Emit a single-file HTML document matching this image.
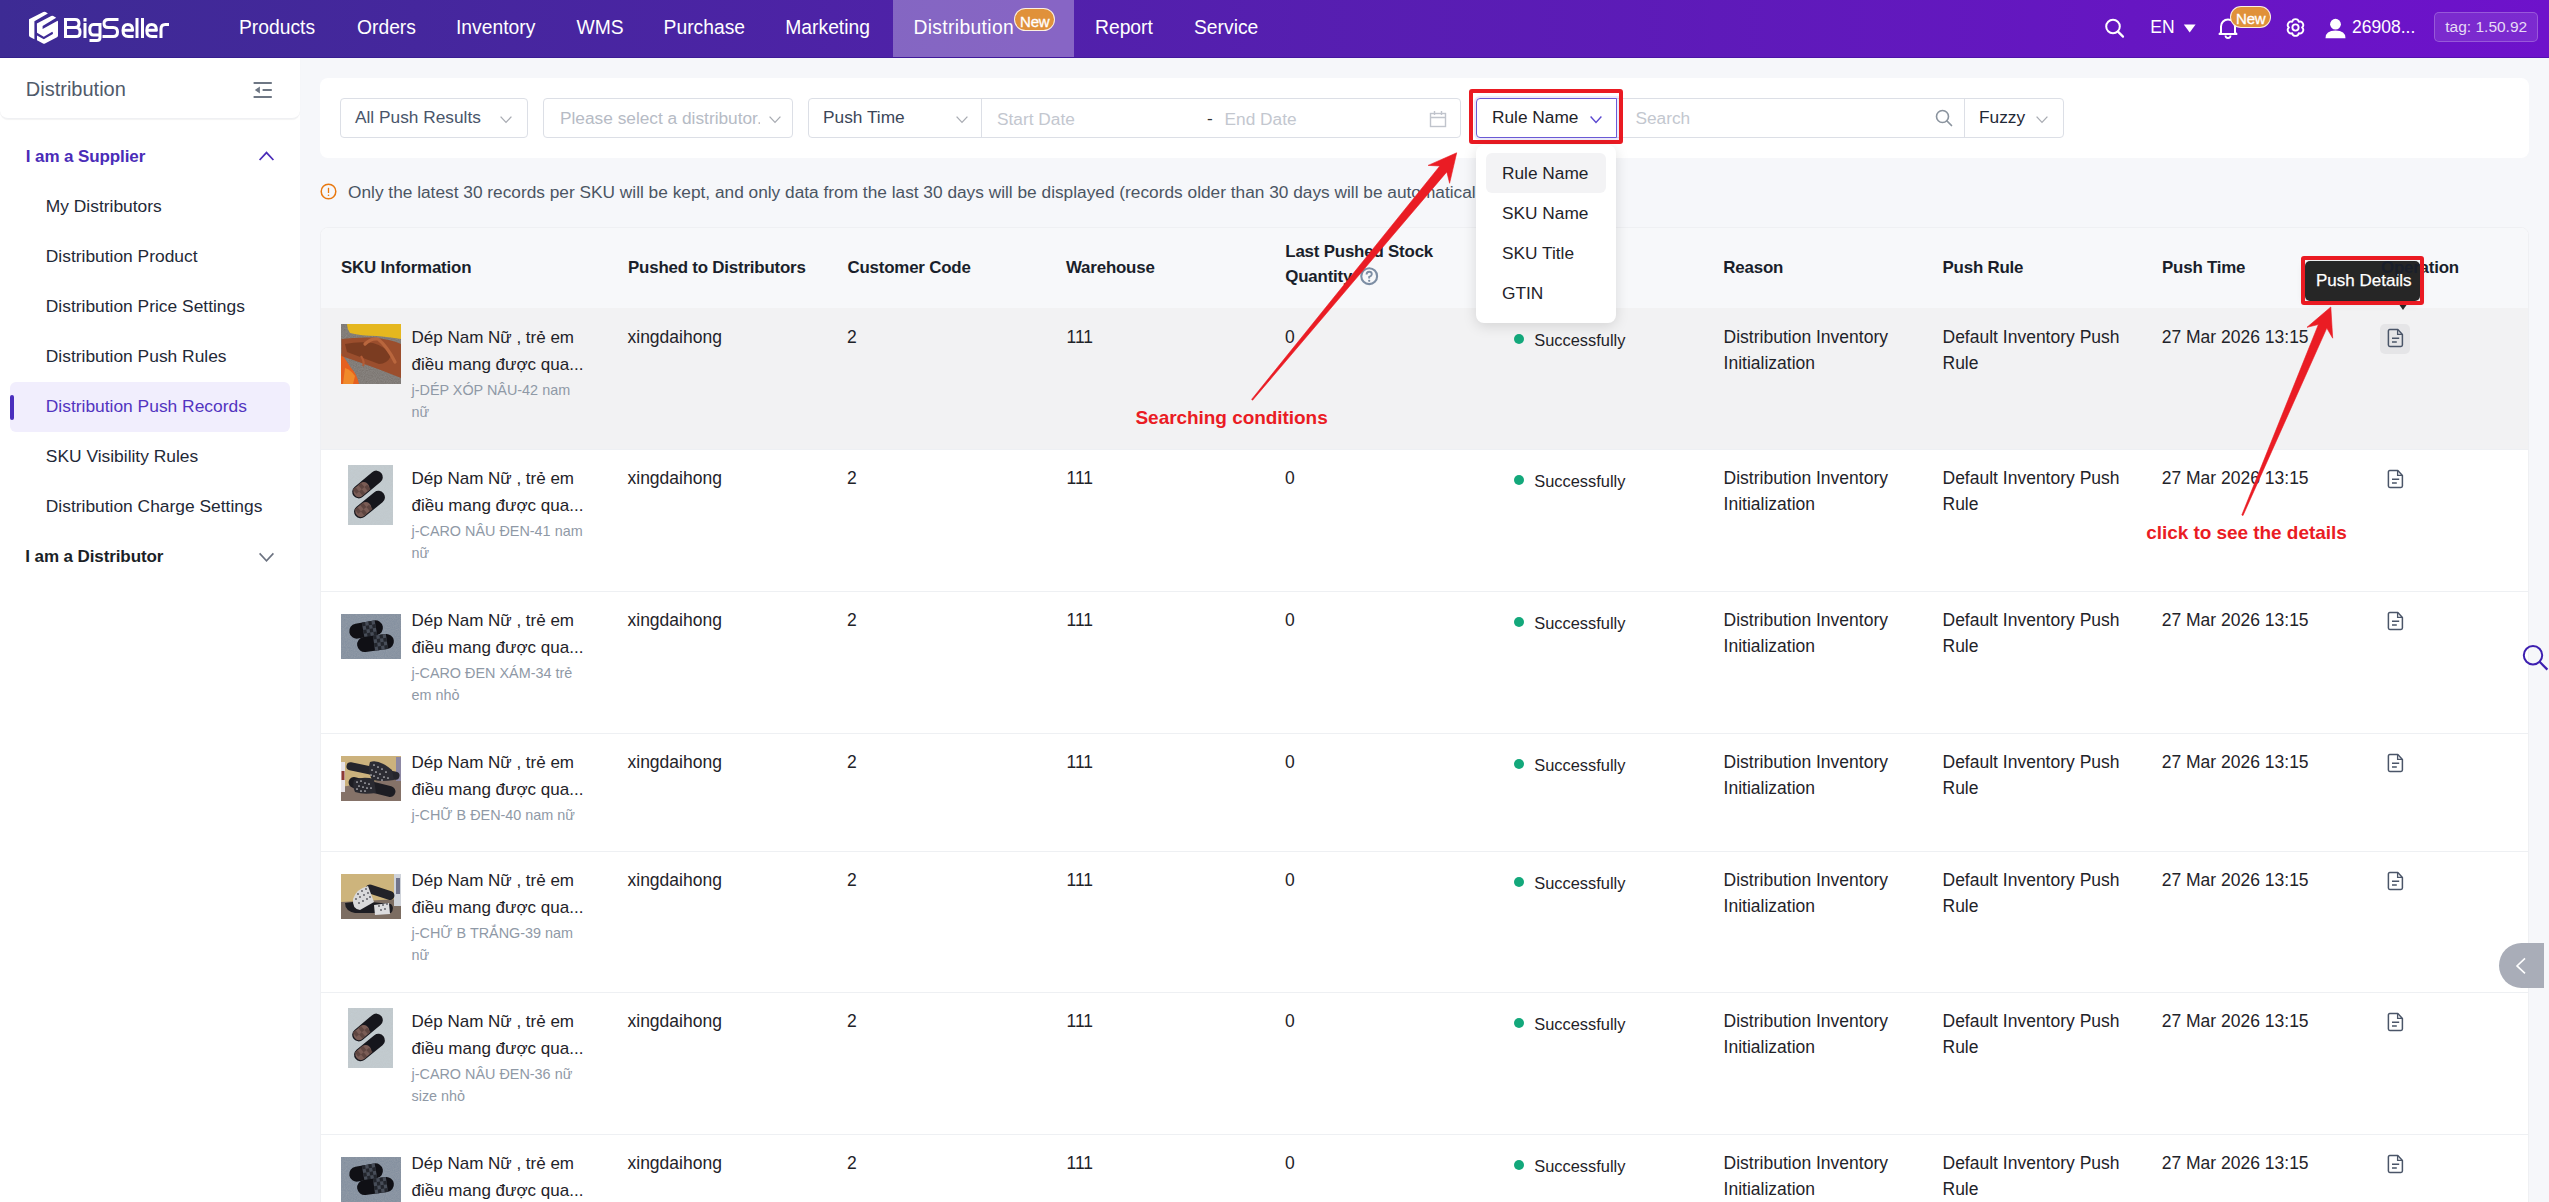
<!DOCTYPE html><html><head><meta charset="utf-8"><title>BigSeller</title><style>
html,body{margin:0;padding:0;}
body{width:2549px;height:1202px;overflow:hidden;position:relative;background:#f6f7fa;font-family:"Liberation Sans",sans-serif;}
.t{position:absolute;white-space:nowrap;line-height:1;}
.b{position:absolute;box-sizing:border-box;}
.s{position:absolute;overflow:visible;}
</style></head><body>
<div class="b" style="left:0px;top:0px;width:2549px;height:58px;background:linear-gradient(90deg,#3d2b94 0%,#6e12cb 100%);"></div>
<div class="b" style="left:0px;top:57px;width:2549px;height:1px;background:rgba(30,10,120,0.3);"></div>
<div class="b" style="left:893px;top:0px;width:181px;height:57px;background:rgba(255,255,255,0.31);"></div>
<svg class="s" style="left:24px;top:8px;" width="40" height="40" viewBox="0 0 40 40"><g fill="#fff"><path d="M5,11.2 L19.3,3.9 Q20.5,3.4 21.6,4 L23.9,5.4 L10.4,13.2 L10.4,31.2 L6,28.9 Q5,28.3 5,27.2 Z"/><path d="M12.9,15.6 L27.2,7.9 Q28.3,7.4 29.3,8 L32.2,9.8 L18.6,18 L18.6,20.9 L33.6,12.8 L34,13.6 L34,27.6 Q34,28.6 33,29.2 L21,35.6 Q20,36.1 19,35.6 L13,32.3 L13,27.6 L19.8,31.3 L28.9,26 Q29.4,24.6 28.2,23.8 L19.8,28.7 L13,24.8 Z"/></g></svg>
<svg class="s" style="left:0px;top:0px;" width="180" height="50" viewBox="0 0 180 50"><g fill="none" stroke="#fff" stroke-width="3" stroke-linejoin="round"><path d="M65.5,18 L65.5,38 M65.5,19.5 L75,19.5 Q79,19.5 79,23.2 L79,23.8 Q79,27.5 75,27.5 L65.5,27.5 L76,27.5 Q80,27.5 80,31.6 L80,32.4 Q80,36.5 76,36.5 L65.5,36.5"/><path d="M85,23 L85,38"/><path d="M100,24.5 L93.5,24.5 Q89.8,24.5 89.8,29.7 Q89.8,35 93.5,35 L100,35 M100,23 L100,37.5 Q100,40.5 96.8,40.5 L89.5,40.5"/><path d="M118.5,19.5 L108.2,19.5 Q104,19.5 104,23.5 Q104,27.5 108.2,27.5 L113.3,27.5 Q117.5,27.5 117.5,32 Q117.5,36.5 113.3,36.5 L102.5,36.5"/><path d="M123,30.3 L132.6,30.3 Q132.6,24.5 127.8,24.5 Q123,24.5 123,30.5 Q123,36.5 128.2,36.5 L133.5,36.5"/><path d="M137,18 L137,38 M142.5,18 L142.5,38"/><path d="M146.8,30.3 L156.4,30.3 Q156.4,24.5 151.6,24.5 Q146.8,24.5 146.8,30.5 Q146.8,36.5 152,36.5 L157.3,36.5"/><path d="M161,38 L161,29 Q161,24.5 165.2,24.5 L169,24.5"/></g><rect x="83.5" y="18" width="3" height="3.5" fill="#fff"/></svg>
<div class="t" style="left:239.0px;top:18.26px;font-size:19.3px;color:#fff;">Products</div>
<div class="t" style="left:357.0px;top:18.26px;font-size:19.3px;color:#fff;">Orders</div>
<div class="t" style="left:456.0px;top:18.26px;font-size:19.3px;color:#fff;">Inventory</div>
<div class="t" style="left:576.5px;top:18.26px;font-size:19.3px;color:#fff;">WMS</div>
<div class="t" style="left:663.6px;top:18.26px;font-size:19.3px;color:#fff;">Purchase</div>
<div class="t" style="left:785.3px;top:18.26px;font-size:19.3px;color:#fff;">Marketing</div>
<div class="t" style="left:913.4px;top:18.26px;font-size:19.3px;color:#fff;letter-spacing:0.35px;">Distribution</div>
<div class="t" style="left:1095.0px;top:18.26px;font-size:19.3px;color:#fff;">Report</div>
<div class="t" style="left:1194.0px;top:18.26px;font-size:19.3px;color:#fff;">Service</div>
<div class="b" style="left:1014px;top:8px;width:41px;height:23px;background:#e0913a;border:1px solid rgba(255,255,255,0.85);border-radius:12px;"></div>
<div class="t" style="left:1020.0px;top:13.50px;font-size:15px;color:#fff;letter-spacing:-0.2px;-webkit-text-stroke:0.3px #fff;">New</div>
<svg class="s" style="left:2104px;top:18px;" width="22" height="20" viewBox="0 0 22 20"><circle cx="9" cy="8.5" r="6.8" fill="none" stroke="#fff" stroke-width="2"/><path d="M14,13.6 L19,18.6" stroke="#fff" stroke-width="2.2" stroke-linecap="round"/></svg>
<div class="t" style="left:2150.3px;top:18.78px;font-size:17.5px;color:#fff;">EN</div>
<svg class="s" style="left:2183px;top:24px;" width="14" height="10" viewBox="0 0 14 10"><path d="M0.8,0.6 L12.6,0.6 L6.7,8.4 Z" fill="#fff"/></svg>
<svg class="s" style="left:2218px;top:17px;" width="20" height="22" viewBox="0 0 20 22"><path d="M3,15.5 L3,9.5 A7,7 0 0 1 17,9.5 L17,15.5 L18.5,17 L1.5,17 Z" fill="none" stroke="#fff" stroke-width="2" stroke-linejoin="round"/><path d="M7.5,18.5 A2.5,2.5 0 0 0 12.5,18.5" fill="none" stroke="#fff" stroke-width="1.8"/></svg>
<div class="b" style="left:2230px;top:6px;width:41px;height:22px;background:#e0913a;border:1px solid rgba(255,255,255,0.85);border-radius:12px;"></div>
<div class="t" style="left:2236.0px;top:11.00px;font-size:15px;color:#fff;letter-spacing:-0.2px;-webkit-text-stroke:0.3px #fff;">New</div>
<svg class="s" style="left:2285px;top:17px;" width="21" height="21" viewBox="0 0 21 21"><path d="M7.20,4.78 C7.85,1.27 13.15,1.27 13.80,4.78 C17.17,3.59 19.81,8.18 17.10,10.50 C19.81,12.82 17.17,17.41 13.80,16.22 C13.15,19.73 7.85,19.73 7.20,16.22 C3.83,17.41 1.19,12.82 3.90,10.50 C1.19,8.18 3.83,3.59 7.20,4.78 Z" fill="none" stroke="#fff" stroke-width="1.9" stroke-linejoin="round"/><circle cx="10.5" cy="10.5" r="3.1" fill="none" stroke="#fff" stroke-width="1.9"/></svg>
<svg class="s" style="left:2325px;top:18px;" width="21" height="21" viewBox="0 0 21 21"><circle cx="10.5" cy="6.2" r="5.4" fill="#fff"/><path d="M0.5,20.2 Q0.5,12.6 10.5,12.6 Q20.5,12.6 20.5,20.2 Z" fill="#fff"/></svg>
<div class="t" style="left:2352.0px;top:18.98px;font-size:17.5px;color:#fff;">26908...</div>
<div class="b" style="left:2434px;top:12px;width:104px;height:30px;background:rgba(255,255,255,0.1);border:1px solid rgba(255,255,255,0.22);border-radius:5px;"></div>
<div class="t" style="left:2445.3px;top:19.28px;font-size:15.5px;color:#e6dcf5;">tag: 1.50.92</div>
<div class="b" style="left:0px;top:58px;width:300px;height:1144px;background:#fff;"></div>
<div class="b" style="left:0px;top:58px;width:300px;height:61px;background:#fff;border-radius:0 0 8px 8px;box-shadow:0 1px 1px rgba(0,0,0,0.05);border-bottom:1px solid #eff0f3;"></div>
<div class="t" style="left:25.8px;top:79.37px;font-size:20px;color:#505a6a;">Distribution</div>
<svg class="s" style="left:252px;top:80px;" width="22" height="19" viewBox="0 0 22 19"><path d="M1.6,2.9 L19.8,2.9 M10.6,10 L19.8,10 M1.6,16.9 L19.8,16.9" stroke="#6e7784" stroke-width="2"/><path d="M2.8,10 L7.9,6.6 L7.9,13.4 Z" fill="#6e7784"/></svg>
<div class="t" style="left:25.8px;top:147.61px;font-size:17px;color:#4a2cb8;font-weight:700;letter-spacing:-0.1px;">I am a Supplier</div>
<svg class="s" style="left:258px;top:150px;" width="17" height="12" viewBox="0 0 17 12"><path d="M1.6,10 L8.5,2.6 L15.4,10" fill="none" stroke="#4a2cb8" stroke-width="1.7"/></svg>
<div class="b" style="left:10px;top:382px;width:280px;height:50px;background:#f1eefd;border-radius:6px;"></div>
<div class="b" style="left:10px;top:395px;width:4px;height:25px;background:#4a2fbd;border-radius:2px;"></div>
<div class="t" style="left:45.8px;top:198.07px;font-size:17.4px;color:#1f2937;">My Distributors</div>
<div class="t" style="left:45.8px;top:248.07px;font-size:17.4px;color:#1f2937;">Distribution Product</div>
<div class="t" style="left:45.8px;top:298.07px;font-size:17.4px;color:#1f2937;">Distribution Price Settings</div>
<div class="t" style="left:45.8px;top:348.07px;font-size:17.4px;color:#1f2937;">Distribution Push Rules</div>
<div class="t" style="left:45.8px;top:398.07px;font-size:17.4px;color:#5234c0;">Distribution Push Records</div>
<div class="t" style="left:45.8px;top:448.07px;font-size:17.4px;color:#1f2937;">SKU Visibility Rules</div>
<div class="t" style="left:45.8px;top:498.07px;font-size:17.4px;color:#1f2937;">Distribution Charge Settings</div>
<div class="t" style="left:25.3px;top:547.91px;font-size:17px;color:#1b1f27;font-weight:700;letter-spacing:-0.1px;">I am a Distributor</div>
<svg class="s" style="left:258px;top:551px;" width="17" height="12" viewBox="0 0 17 12"><path d="M1.6,2.4 L8.5,9.8 L15.4,2.4" fill="none" stroke="#6b7280" stroke-width="1.6"/></svg>
<div class="b" style="left:320px;top:78px;width:2209px;height:80px;background:#fff;border-radius:8px;"></div>
<div class="b" style="left:340px;top:98px;width:188px;height:40px;border:1px solid #dcdfe6;border-radius:4px;background:#fff;"></div>
<div class="t" style="left:355.0px;top:108.65px;font-size:17.3px;color:#49556a;">All Push Results</div>
<svg class="s" style="left:500px;top:115.5px;" width="12" height="7" viewBox="0 0 12 7"><path d="M0.6,0.6 L6.0,6.4 L11.4,0.6" fill="none" stroke="#a8abb2" stroke-width="1.3"/></svg>
<div class="b" style="left:543px;top:98px;width:250px;height:40px;border:1px solid #dcdfe6;border-radius:4px;background:#fff;"></div>
<div class="t" style="left:560px;top:108px;font-size:17.3px;color:#b6bbc5;width:200px;overflow:hidden;line-height:20px;">Please select a distributor.</div>
<svg class="s" style="left:769px;top:115.5px;" width="12" height="7" viewBox="0 0 12 7"><path d="M0.6,0.6 L6.0,6.4 L11.4,0.6" fill="none" stroke="#a8abb2" stroke-width="1.3"/></svg>
<div class="b" style="left:808px;top:98px;width:653px;height:40px;border:1px solid #dcdfe6;border-radius:4px;background:#fff;"></div>
<div class="b" style="left:981px;top:98px;width:1px;height:40px;background:#dcdfe6;"></div>
<div class="t" style="left:823.0px;top:108.65px;font-size:17.3px;color:#3b4658;">Push Time</div>
<svg class="s" style="left:956px;top:115.5px;" width="12" height="7" viewBox="0 0 12 7"><path d="M0.6,0.6 L6.0,6.4 L11.4,0.6" fill="none" stroke="#a8abb2" stroke-width="1.3"/></svg>
<div class="t" style="left:997.0px;top:111.15px;font-size:17.3px;color:#c3c7cf;">Start Date</div>
<div class="t" style="left:1207.0px;top:110.35px;font-size:17.3px;color:#303133;">-</div>
<div class="t" style="left:1224.5px;top:111.25px;font-size:17.3px;color:#c3c7cf;">End Date</div>
<svg class="s" style="left:1429px;top:110px;" width="18" height="18" viewBox="0 0 18 18"><rect x="1.5" y="3.5" width="15" height="13" fill="none" stroke="#c0c4cc" stroke-width="1.4"/><path d="M1.5,7.5 L16.5,7.5 M5.5,1 L5.5,5 M12.5,1 L12.5,5" stroke="#c0c4cc" stroke-width="1.4"/></svg>
<div class="b" style="left:1600px;top:98px;width:464px;height:40px;border:1px solid #dcdfe6;border-radius:0 4px 4px 0;background:#fff;"></div>
<div class="b" style="left:1964px;top:98px;width:1px;height:40px;background:#dcdfe6;"></div>
<div class="t" style="left:1635.4px;top:109.65px;font-size:17.3px;color:#c3c7cf;">Search</div>
<svg class="s" style="left:1935px;top:109px;" width="18" height="18" viewBox="0 0 18 18"><circle cx="7.5" cy="7.5" r="6" fill="none" stroke="#8a939e" stroke-width="1.6"/><path d="M12,12 L16.5,16.5" stroke="#8a939e" stroke-width="1.7" stroke-linecap="round"/></svg>
<div class="t" style="left:1979.0px;top:108.65px;font-size:17.3px;color:#1f2937;">Fuzzy</div>
<svg class="s" style="left:2036px;top:115.5px;" width="12" height="7" viewBox="0 0 12 7"><path d="M0.6,0.6 L6.0,6.4 L11.4,0.6" fill="none" stroke="#a8abb2" stroke-width="1.3"/></svg>
<div class="b" style="left:1476px;top:98px;width:141px;height:40px;border:1px solid #6b5bd6;border-radius:4px 0 0 4px;background:#fff;box-shadow:0 0 0 2px rgba(107,91,214,0.12);"></div>
<div class="t" style="left:1492.0px;top:109.15px;font-size:17.3px;color:#1f2329;">Rule Name</div>
<svg class="s" style="left:1590px;top:116px;" width="12" height="7" viewBox="0 0 12 7"><path d="M0.6,0.6 L6.0,6.4 L11.4,0.6" fill="none" stroke="#5a48d0" stroke-width="1.4"/></svg>
<div class="b" style="left:1469px;top:89px;width:154px;height:55px;border:4px solid #ea1a22;border-radius:3px;"></div>
<svg class="s" style="left:320px;top:183px;" width="17" height="17" viewBox="0 0 17 17"><circle cx="8.5" cy="8.5" r="7.3" fill="none" stroke="#e8780f" stroke-width="1.5"/><path d="M8.5,4.8 L8.5,10" stroke="#e8780f" stroke-width="1.3"/><circle cx="8.5" cy="12.3" r="0.8" fill="#e8780f"/></svg>
<div class="t" style="left:348.0px;top:183.65px;font-size:17.3px;color:#4b5563;">Only the latest 30 records per SKU will be kept, and only data from the last 30 days will be displayed (records older than 30 days will be automatically deleted)</div>
<div class="b" style="left:320px;top:227px;width:2209px;height:983px;background:#fff;border:1px solid #eff0f3;border-radius:8px;"></div>
<div class="b" style="left:321px;top:228px;width:2207px;height:80px;background:#f7f8fa;border-radius:7px 7px 0 0;"></div>
<div class="t" style="left:341.0px;top:259.69px;font-size:16.9px;color:#1a1f2b;font-weight:700;letter-spacing:-0.2px;z-index:30;">SKU Information</div>
<div class="t" style="left:628.0px;top:259.69px;font-size:16.9px;color:#1a1f2b;font-weight:700;letter-spacing:-0.2px;z-index:30;">Pushed to Distributors</div>
<div class="t" style="left:847.5px;top:259.69px;font-size:16.9px;color:#1a1f2b;font-weight:700;letter-spacing:-0.2px;z-index:30;">Customer Code</div>
<div class="t" style="left:1066.0px;top:259.69px;font-size:16.9px;color:#1a1f2b;font-weight:700;letter-spacing:-0.2px;z-index:30;">Warehouse</div>
<div class="t" style="left:1285.3px;top:243.89px;font-size:16.9px;color:#1a1f2b;font-weight:700;letter-spacing:-0.2px;z-index:30;">Last Pushed Stock</div>
<div class="t" style="left:1285.3px;top:268.59px;font-size:16.9px;color:#1a1f2b;font-weight:700;letter-spacing:-0.2px;z-index:30;">Quantity</div>
<svg class="s" style="left:1360px;top:267px;" width="19" height="19" viewBox="0 0 19 19"><circle cx="9.2" cy="9.2" r="7.9" fill="none" stroke="#7d8ea4" stroke-width="2.1"/><path d="M6.6,7.4 Q6.6,4.8 9.2,4.8 Q11.8,4.8 11.8,7.2 Q11.8,8.8 9.2,9.8 L9.2,11.4" fill="none" stroke="#7d8ea4" stroke-width="1.9"/><circle cx="9.2" cy="13.8" r="1.15" fill="#7d8ea4"/></svg>
<div class="t" style="left:1504.0px;top:259.69px;font-size:16.9px;color:#1a1f2b;font-weight:700;letter-spacing:-0.2px;z-index:30;">Push Result</div>
<div class="t" style="left:1723.3px;top:259.69px;font-size:16.9px;color:#1a1f2b;font-weight:700;letter-spacing:-0.2px;z-index:30;">Reason</div>
<div class="t" style="left:1942.5px;top:259.69px;font-size:16.9px;color:#1a1f2b;font-weight:700;letter-spacing:-0.2px;z-index:30;">Push Rule</div>
<div class="t" style="left:2162.0px;top:259.69px;font-size:16.9px;color:#1a1f2b;font-weight:700;letter-spacing:-0.2px;z-index:30;">Push Time</div>
<div class="t" style="left:2381.0px;top:259.69px;font-size:16.9px;color:#1a1f2b;font-weight:700;letter-spacing:-0.2px;z-index:30;">Operation</div>
<div class="b" style="left:321px;top:308px;width:2207px;height:141px;background:#f2f2f3;"></div>
<svg class="s" style="left:341px;top:324px;" width="60" height="60" viewBox="0 0 60 60"><rect width="60" height="60" fill="#76706b"/><rect width="60" height="60" fill="#fff" filter="url(#nz)"/><path d="M6,0 L60,0 L60,15 Q48,13 36,12 Q20,12 9,9 Q6,5 6,0 Z" fill="#e5b71f"/><path d="M0,29 L0,60 L18,60 Q16,50 10,44 Q5,36 0,29 Z" fill="#e5601f"/><path d="M4,44 Q10,46 14,52 L12,60 L2,60 Z" fill="#f08a2a"/><path d="M0.5,15 Q14,13 31,13.5 Q50,15 60,20 L60,54 Q50,50 37,45 Q18,38 0.5,32 Z" fill="#9b4e2d"/><path d="M4,20 Q18,17 32,19 Q44,22 50,32 Q46,40 38,40 Q22,34 6,28 Z" fill="#7b3c21"/><path d="M24,20 Q30,14 37,15 Q46,22 54,38" fill="none" stroke="#b9663d" stroke-width="3.2" stroke-linecap="round"/><path d="M20,32 Q24,38 22,42" fill="none" stroke="#b25c36" stroke-width="2.2"/></svg>
<div class="t" style="left:411.5px;top:329.11px;font-size:17px;color:#1f2329;">Dép Nam Nữ , trẻ em</div>
<div class="t" style="left:411.5px;top:355.81px;font-size:17px;color:#1f2329;">điều mang được qua...</div>
<div class="t" style="left:411.5px;top:382.61px;font-size:14.4px;color:#8f99a6;">j-DÉP XÓP NÂU-42 nam</div>
<div class="t" style="left:411.5px;top:405.41px;font-size:14.4px;color:#8f99a6;">nữ</div>
<div class="t" style="left:627.5px;top:328.98px;font-size:17.5px;color:#1f2329;">xingdaihong</div>
<div class="t" style="left:847.0px;top:328.98px;font-size:17.5px;color:#1f2329;">2</div>
<div class="t" style="left:1066.5px;top:328.98px;font-size:17.5px;color:#1f2329;">111</div>
<div class="t" style="left:1285.0px;top:328.98px;font-size:17.5px;color:#1f2329;">0</div>
<div class="b" style="left:1514px;top:334px;width:10px;height:10px;background:#13a87b;border-radius:50%;"></div>
<div class="t" style="left:1534.3px;top:332.31px;font-size:16.4px;color:#1f2329;">Successfully</div>
<div class="t" style="left:1723.6px;top:329.38px;font-size:17.5px;color:#1f2329;">Distribution Inventory</div>
<div class="t" style="left:1723.6px;top:355.48px;font-size:17.5px;color:#1f2329;">Initialization</div>
<div class="t" style="left:1942.5px;top:329.38px;font-size:17.5px;color:#1f2329;">Default Inventory Push</div>
<div class="t" style="left:1942.5px;top:355.48px;font-size:17.5px;color:#1f2329;">Rule</div>
<div class="t" style="left:2161.7px;top:329.18px;font-size:17.5px;color:#1f2329;">27 Mar 2026 13:15</div>
<div class="b" style="left:2380px;top:324px;width:30px;height:30px;background:#e5e5e7;border-radius:5px;"></div>
<svg class="s" style="left:2386px;top:328px;" width="19" height="20" viewBox="0 0 19 20"><path d="M2.4,3 Q2.4,1.6 3.8,1.6 L11.8,1.6 L16.4,6.4 L16.4,17 Q16.4,18.4 15,18.4 L3.8,18.4 Q2.4,18.4 2.4,17 Z" fill="none" stroke="#4a5568" stroke-width="1.5" stroke-linejoin="round"/><path d="M11.6,1.8 L11.6,6.4 L16.2,6.4" fill="none" stroke="#4a5568" stroke-width="1.3"/><path d="M6,10.3 L13.2,10.3 M6,13.9 L10.8,13.9" stroke="#4a5568" stroke-width="1.5"/></svg>
<div class="b" style="left:321px;top:449px;width:2207px;height:1px;background:#eef0f3;"></div>
<svg class="s" style="left:348px;top:465px;" width="45" height="60" viewBox="0 0 45 60"><defs><filter id="nz" x="0" y="0" width="100%" height="100%"><feTurbulence type="fractalNoise" baseFrequency="0.9" numOctaves="2" seed="3"/><feColorMatrix values="0 0 0 0 0.5  0 0 0 0 0.5  0 0 0 0 0.5  0 0 0 0.35 0"/><feComposite in2="SourceGraphic" operator="in"/></filter></defs><rect width="45" height="60" fill="#c3cdd2"/><rect width="45" height="60" fill="#fff" filter="url(#nz)"/><g transform="rotate(-40 19.5 19.5)"><rect x="1.5" y="13" width="36" height="13" rx="6.5" fill="#16161c"/><rect x="3" y="14" width="17" height="11" rx="5" fill="#7a5c55"/><rect x="5.00" y="14.00" width="3.50" height="5.50" fill="#5e4540"/><rect x="8.50" y="19.50" width="3.50" height="5.50" fill="#5e4540"/><rect x="12.00" y="14.00" width="3.50" height="5.50" fill="#5e4540"/><rect x="15.50" y="19.50" width="3.50" height="5.50" fill="#5e4540"/></g><g transform="rotate(-39 21.5 39.5)"><rect x="3.5" y="33" width="36" height="13" rx="6.5" fill="#16161c"/><rect x="5" y="34" width="17" height="11" rx="5" fill="#7a5c55"/><rect x="7.00" y="34.00" width="3.50" height="5.50" fill="#5e4540"/><rect x="10.50" y="39.50" width="3.50" height="5.50" fill="#5e4540"/><rect x="14.00" y="34.00" width="3.50" height="5.50" fill="#5e4540"/><rect x="17.50" y="39.50" width="3.50" height="5.50" fill="#5e4540"/></g></svg>
<div class="t" style="left:411.5px;top:470.11px;font-size:17px;color:#1f2329;">Dép Nam Nữ , trẻ em</div>
<div class="t" style="left:411.5px;top:496.81px;font-size:17px;color:#1f2329;">điều mang được qua...</div>
<div class="t" style="left:411.5px;top:523.61px;font-size:14.4px;color:#8f99a6;">j-CARO NÂU ĐEN-41 nam</div>
<div class="t" style="left:411.5px;top:546.41px;font-size:14.4px;color:#8f99a6;">nữ</div>
<div class="t" style="left:627.5px;top:469.98px;font-size:17.5px;color:#1f2329;">xingdaihong</div>
<div class="t" style="left:847.0px;top:469.98px;font-size:17.5px;color:#1f2329;">2</div>
<div class="t" style="left:1066.5px;top:469.98px;font-size:17.5px;color:#1f2329;">111</div>
<div class="t" style="left:1285.0px;top:469.98px;font-size:17.5px;color:#1f2329;">0</div>
<div class="b" style="left:1514px;top:475px;width:10px;height:10px;background:#13a87b;border-radius:50%;"></div>
<div class="t" style="left:1534.3px;top:473.31px;font-size:16.4px;color:#1f2329;">Successfully</div>
<div class="t" style="left:1723.6px;top:470.38px;font-size:17.5px;color:#1f2329;">Distribution Inventory</div>
<div class="t" style="left:1723.6px;top:496.48px;font-size:17.5px;color:#1f2329;">Initialization</div>
<div class="t" style="left:1942.5px;top:470.38px;font-size:17.5px;color:#1f2329;">Default Inventory Push</div>
<div class="t" style="left:1942.5px;top:496.48px;font-size:17.5px;color:#1f2329;">Rule</div>
<div class="t" style="left:2161.7px;top:470.18px;font-size:17.5px;color:#1f2329;">27 Mar 2026 13:15</div>
<svg class="s" style="left:2386px;top:469px;" width="19" height="20" viewBox="0 0 19 20"><path d="M2.4,3 Q2.4,1.6 3.8,1.6 L11.8,1.6 L16.4,6.4 L16.4,17 Q16.4,18.4 15,18.4 L3.8,18.4 Q2.4,18.4 2.4,17 Z" fill="none" stroke="#4a5568" stroke-width="1.5" stroke-linejoin="round"/><path d="M11.6,1.8 L11.6,6.4 L16.2,6.4" fill="none" stroke="#4a5568" stroke-width="1.3"/><path d="M6,10.3 L13.2,10.3 M6,13.9 L10.8,13.9" stroke="#4a5568" stroke-width="1.5"/></svg>
<div class="b" style="left:321px;top:591px;width:2207px;height:1px;background:#eef0f3;"></div>
<svg class="s" style="left:341px;top:614px;" width="60" height="45" viewBox="0 0 60 45"><defs><filter id="nz" x="0" y="0" width="100%" height="100%"><feTurbulence type="fractalNoise" baseFrequency="0.9" numOctaves="2" seed="3"/><feColorMatrix values="0 0 0 0 0.5  0 0 0 0 0.5  0 0 0 0 0.5  0 0 0 0.35 0"/><feComposite in2="SourceGraphic" operator="in"/></filter></defs><rect width="60" height="45" fill="#7f8c9d"/><rect width="60" height="45" fill="#fff" filter="url(#nz)"/><g transform="rotate(-10 25 15)"><rect x="8" y="8" width="34" height="15" rx="7.5" fill="#101015"/><rect x="22" y="8" width="13" height="15" fill="#474d58"/><rect x="22" y="8" width="3.25" height="3.75" fill="#23262d"/><rect x="28.5" y="8" width="3.25" height="3.75" fill="#23262d"/><rect x="25.25" y="11.75" width="3.25" height="3.75" fill="#23262d"/><rect x="31.75" y="11.75" width="3.25" height="3.75" fill="#23262d"/><rect x="22" y="15.5" width="3.25" height="3.75" fill="#23262d"/><rect x="28.5" y="15.5" width="3.25" height="3.75" fill="#23262d"/><rect x="25.25" y="19.25" width="3.25" height="3.75" fill="#23262d"/><rect x="31.75" y="19.25" width="3.25" height="3.75" fill="#23262d"/></g><g transform="rotate(-8 34.5 29)"><rect x="16" y="21.5" width="37" height="15" rx="7.5" fill="#101015"/><rect x="33" y="21.5" width="13" height="15" fill="#474d58"/><rect x="33" y="21.5" width="3.25" height="3.75" fill="#23262d"/><rect x="39.5" y="21.5" width="3.25" height="3.75" fill="#23262d"/><rect x="36.25" y="25.25" width="3.25" height="3.75" fill="#23262d"/><rect x="42.75" y="25.25" width="3.25" height="3.75" fill="#23262d"/><rect x="33" y="29" width="3.25" height="3.75" fill="#23262d"/><rect x="39.5" y="29" width="3.25" height="3.75" fill="#23262d"/><rect x="36.25" y="32.75" width="3.25" height="3.75" fill="#23262d"/><rect x="42.75" y="32.75" width="3.25" height="3.75" fill="#23262d"/></g></svg>
<div class="t" style="left:411.5px;top:612.11px;font-size:17px;color:#1f2329;">Dép Nam Nữ , trẻ em</div>
<div class="t" style="left:411.5px;top:638.81px;font-size:17px;color:#1f2329;">điều mang được qua...</div>
<div class="t" style="left:411.5px;top:665.61px;font-size:14.4px;color:#8f99a6;">j-CARO ĐEN XÁM-34 trẻ</div>
<div class="t" style="left:411.5px;top:688.41px;font-size:14.4px;color:#8f99a6;">em nhỏ</div>
<div class="t" style="left:627.5px;top:611.98px;font-size:17.5px;color:#1f2329;">xingdaihong</div>
<div class="t" style="left:847.0px;top:611.98px;font-size:17.5px;color:#1f2329;">2</div>
<div class="t" style="left:1066.5px;top:611.98px;font-size:17.5px;color:#1f2329;">111</div>
<div class="t" style="left:1285.0px;top:611.98px;font-size:17.5px;color:#1f2329;">0</div>
<div class="b" style="left:1514px;top:617px;width:10px;height:10px;background:#13a87b;border-radius:50%;"></div>
<div class="t" style="left:1534.3px;top:615.31px;font-size:16.4px;color:#1f2329;">Successfully</div>
<div class="t" style="left:1723.6px;top:612.38px;font-size:17.5px;color:#1f2329;">Distribution Inventory</div>
<div class="t" style="left:1723.6px;top:638.48px;font-size:17.5px;color:#1f2329;">Initialization</div>
<div class="t" style="left:1942.5px;top:612.38px;font-size:17.5px;color:#1f2329;">Default Inventory Push</div>
<div class="t" style="left:1942.5px;top:638.48px;font-size:17.5px;color:#1f2329;">Rule</div>
<div class="t" style="left:2161.7px;top:612.18px;font-size:17.5px;color:#1f2329;">27 Mar 2026 13:15</div>
<svg class="s" style="left:2386px;top:611px;" width="19" height="20" viewBox="0 0 19 20"><path d="M2.4,3 Q2.4,1.6 3.8,1.6 L11.8,1.6 L16.4,6.4 L16.4,17 Q16.4,18.4 15,18.4 L3.8,18.4 Q2.4,18.4 2.4,17 Z" fill="none" stroke="#4a5568" stroke-width="1.5" stroke-linejoin="round"/><path d="M11.6,1.8 L11.6,6.4 L16.2,6.4" fill="none" stroke="#4a5568" stroke-width="1.3"/><path d="M6,10.3 L13.2,10.3 M6,13.9 L10.8,13.9" stroke="#4a5568" stroke-width="1.5"/></svg>
<div class="b" style="left:321px;top:733px;width:2207px;height:1px;background:#eef0f3;"></div>
<svg class="s" style="left:341px;top:756px;" width="60" height="45" viewBox="0 0 60 45"><rect width="60" height="45" fill="#ccb27d"/><path d="M0,31 L60,21 L60,45 L0,45 Z" fill="#857268"/><rect x="0" y="6" width="4" height="30" fill="#e6e2e6"/><rect x="0.5" y="15" width="3" height="9" fill="#8e3a36"/><rect x="55" y="1" width="5" height="24" fill="#8d88a3"/><g transform="rotate(12 32 15)"><rect x="5" y="11" width="54" height="8" rx="4" fill="#25252c"/></g><path d="M29,6 Q38,3 51,14 L53,24 Q40,26 31,24 Q26,15 29,6 Z" fill="#2c2c34"/><g transform="rotate(14 31 31)"><rect x="7" y="25.5" width="48" height="11" rx="5.5" fill="#1d1d23"/></g><path d="M13,24 Q22,20 33,23 L35,37 Q22,39 14,36 Q11,30 13,24 Z" fill="#2a2a31"/><g fill="#c9c9ce"><circle cx="33" cy="9" r="0.85"/><circle cx="37" cy="11" r="0.85"/><circle cx="41" cy="13" r="0.85"/><circle cx="45" cy="16" r="0.85"/><circle cx="31" cy="14" r="0.85"/><circle cx="35" cy="16" r="0.85"/><circle cx="39" cy="18" r="0.85"/><circle cx="43" cy="21" r="0.85"/><circle cx="47" cy="22" r="0.85"/><circle cx="33" cy="20" r="0.85"/><circle cx="37" cy="22" r="0.85"/><circle cx="41" cy="24" r="0.85"/><circle cx="30" cy="19" r="0.85"/><circle cx="16" cy="26" r="0.85"/><circle cx="20" cy="25" r="0.85"/><circle cx="24" cy="27" r="0.85"/><circle cx="28" cy="28" r="0.85"/><circle cx="18" cy="30" r="0.85"/><circle cx="22" cy="31" r="0.85"/><circle cx="26" cy="32" r="0.85"/><circle cx="30" cy="32" r="0.85"/><circle cx="20" cy="35" r="0.85"/><circle cx="24" cy="35" r="0.85"/><circle cx="16" cy="33" r="0.85"/></g></svg>
<div class="t" style="left:411.5px;top:754.11px;font-size:17px;color:#1f2329;">Dép Nam Nữ , trẻ em</div>
<div class="t" style="left:411.5px;top:780.81px;font-size:17px;color:#1f2329;">điều mang được qua...</div>
<div class="t" style="left:411.5px;top:807.61px;font-size:14.4px;color:#8f99a6;">j-CHỮ B ĐEN-40 nam nữ</div>
<div class="t" style="left:627.5px;top:753.98px;font-size:17.5px;color:#1f2329;">xingdaihong</div>
<div class="t" style="left:847.0px;top:753.98px;font-size:17.5px;color:#1f2329;">2</div>
<div class="t" style="left:1066.5px;top:753.98px;font-size:17.5px;color:#1f2329;">111</div>
<div class="t" style="left:1285.0px;top:753.98px;font-size:17.5px;color:#1f2329;">0</div>
<div class="b" style="left:1514px;top:759px;width:10px;height:10px;background:#13a87b;border-radius:50%;"></div>
<div class="t" style="left:1534.3px;top:757.31px;font-size:16.4px;color:#1f2329;">Successfully</div>
<div class="t" style="left:1723.6px;top:754.38px;font-size:17.5px;color:#1f2329;">Distribution Inventory</div>
<div class="t" style="left:1723.6px;top:780.48px;font-size:17.5px;color:#1f2329;">Initialization</div>
<div class="t" style="left:1942.5px;top:754.38px;font-size:17.5px;color:#1f2329;">Default Inventory Push</div>
<div class="t" style="left:1942.5px;top:780.48px;font-size:17.5px;color:#1f2329;">Rule</div>
<div class="t" style="left:2161.7px;top:754.18px;font-size:17.5px;color:#1f2329;">27 Mar 2026 13:15</div>
<svg class="s" style="left:2386px;top:753px;" width="19" height="20" viewBox="0 0 19 20"><path d="M2.4,3 Q2.4,1.6 3.8,1.6 L11.8,1.6 L16.4,6.4 L16.4,17 Q16.4,18.4 15,18.4 L3.8,18.4 Q2.4,18.4 2.4,17 Z" fill="none" stroke="#4a5568" stroke-width="1.5" stroke-linejoin="round"/><path d="M11.6,1.8 L11.6,6.4 L16.2,6.4" fill="none" stroke="#4a5568" stroke-width="1.3"/><path d="M6,10.3 L13.2,10.3 M6,13.9 L10.8,13.9" stroke="#4a5568" stroke-width="1.5"/></svg>
<div class="b" style="left:321px;top:851px;width:2207px;height:1px;background:#eef0f3;"></div>
<svg class="s" style="left:341px;top:874px;" width="60" height="45" viewBox="0 0 60 45"><rect width="60" height="45" fill="#cdb47c"/><path d="M0,28 L60,25 L60,45 L0,45 Z" fill="#7c6d62"/><rect x="53" y="0" width="7" height="32" fill="#cfd3da"/><rect x="55" y="4" width="4" height="16" fill="#70738a"/><g transform="rotate(18 38 18)"><rect x="24" y="13.5" width="30" height="9" rx="4.5" fill="#222228"/></g><path d="M4,29 Q4,37 14,39 L50,39 Q54,34 50,30 L20,27 Z" fill="#1c1c22"/><path d="M12,25 Q15,15 27,12 L33,28 L19,36 Q11,35 12,25 Z" fill="#d9d9db"/><path d="M33,31 L48,29 L49,40 L34,41 Z" fill="#dcdcde"/><g fill="#55555d"><circle cx="17" cy="20" r="0.9"/><circle cx="21" cy="17" r="0.9"/><circle cx="25" cy="15" r="0.9"/><circle cx="15" cy="25" r="0.9"/><circle cx="19" cy="23" r="0.9"/><circle cx="23" cy="21" r="0.9"/><circle cx="27" cy="19" r="0.9"/><circle cx="18" cy="29" r="0.9"/><circle cx="22" cy="27" r="0.9"/><circle cx="26" cy="25" r="0.9"/><circle cx="29" cy="23" r="0.9"/><circle cx="38" cy="32" r="0.9"/><circle cx="42" cy="31" r="0.9"/><circle cx="46" cy="30" r="0.9"/><circle cx="40" cy="36" r="0.9"/><circle cx="44" cy="35" r="0.9"/></g></svg>
<div class="t" style="left:411.5px;top:872.11px;font-size:17px;color:#1f2329;">Dép Nam Nữ , trẻ em</div>
<div class="t" style="left:411.5px;top:898.81px;font-size:17px;color:#1f2329;">điều mang được qua...</div>
<div class="t" style="left:411.5px;top:925.61px;font-size:14.4px;color:#8f99a6;">j-CHỮ B TRẮNG-39 nam</div>
<div class="t" style="left:411.5px;top:948.41px;font-size:14.4px;color:#8f99a6;">nữ</div>
<div class="t" style="left:627.5px;top:871.98px;font-size:17.5px;color:#1f2329;">xingdaihong</div>
<div class="t" style="left:847.0px;top:871.98px;font-size:17.5px;color:#1f2329;">2</div>
<div class="t" style="left:1066.5px;top:871.98px;font-size:17.5px;color:#1f2329;">111</div>
<div class="t" style="left:1285.0px;top:871.98px;font-size:17.5px;color:#1f2329;">0</div>
<div class="b" style="left:1514px;top:877px;width:10px;height:10px;background:#13a87b;border-radius:50%;"></div>
<div class="t" style="left:1534.3px;top:875.31px;font-size:16.4px;color:#1f2329;">Successfully</div>
<div class="t" style="left:1723.6px;top:872.38px;font-size:17.5px;color:#1f2329;">Distribution Inventory</div>
<div class="t" style="left:1723.6px;top:898.48px;font-size:17.5px;color:#1f2329;">Initialization</div>
<div class="t" style="left:1942.5px;top:872.38px;font-size:17.5px;color:#1f2329;">Default Inventory Push</div>
<div class="t" style="left:1942.5px;top:898.48px;font-size:17.5px;color:#1f2329;">Rule</div>
<div class="t" style="left:2161.7px;top:872.18px;font-size:17.5px;color:#1f2329;">27 Mar 2026 13:15</div>
<svg class="s" style="left:2386px;top:871px;" width="19" height="20" viewBox="0 0 19 20"><path d="M2.4,3 Q2.4,1.6 3.8,1.6 L11.8,1.6 L16.4,6.4 L16.4,17 Q16.4,18.4 15,18.4 L3.8,18.4 Q2.4,18.4 2.4,17 Z" fill="none" stroke="#4a5568" stroke-width="1.5" stroke-linejoin="round"/><path d="M11.6,1.8 L11.6,6.4 L16.2,6.4" fill="none" stroke="#4a5568" stroke-width="1.3"/><path d="M6,10.3 L13.2,10.3 M6,13.9 L10.8,13.9" stroke="#4a5568" stroke-width="1.5"/></svg>
<div class="b" style="left:321px;top:992px;width:2207px;height:1px;background:#eef0f3;"></div>
<svg class="s" style="left:348px;top:1008px;" width="45" height="60" viewBox="0 0 45 60"><defs><filter id="nz" x="0" y="0" width="100%" height="100%"><feTurbulence type="fractalNoise" baseFrequency="0.9" numOctaves="2" seed="3"/><feColorMatrix values="0 0 0 0 0.5  0 0 0 0 0.5  0 0 0 0 0.5  0 0 0 0.35 0"/><feComposite in2="SourceGraphic" operator="in"/></filter></defs><rect width="45" height="60" fill="#c3cdd2"/><rect width="45" height="60" fill="#fff" filter="url(#nz)"/><g transform="rotate(-40 19.5 19.5)"><rect x="1.5" y="13" width="36" height="13" rx="6.5" fill="#16161c"/><rect x="3" y="14" width="17" height="11" rx="5" fill="#7a5c55"/><rect x="5.00" y="14.00" width="3.50" height="5.50" fill="#5e4540"/><rect x="8.50" y="19.50" width="3.50" height="5.50" fill="#5e4540"/><rect x="12.00" y="14.00" width="3.50" height="5.50" fill="#5e4540"/><rect x="15.50" y="19.50" width="3.50" height="5.50" fill="#5e4540"/></g><g transform="rotate(-39 21.5 39.5)"><rect x="3.5" y="33" width="36" height="13" rx="6.5" fill="#16161c"/><rect x="5" y="34" width="17" height="11" rx="5" fill="#7a5c55"/><rect x="7.00" y="34.00" width="3.50" height="5.50" fill="#5e4540"/><rect x="10.50" y="39.50" width="3.50" height="5.50" fill="#5e4540"/><rect x="14.00" y="34.00" width="3.50" height="5.50" fill="#5e4540"/><rect x="17.50" y="39.50" width="3.50" height="5.50" fill="#5e4540"/></g></svg>
<div class="t" style="left:411.5px;top:1013.11px;font-size:17px;color:#1f2329;">Dép Nam Nữ , trẻ em</div>
<div class="t" style="left:411.5px;top:1039.81px;font-size:17px;color:#1f2329;">điều mang được qua...</div>
<div class="t" style="left:411.5px;top:1066.61px;font-size:14.4px;color:#8f99a6;">j-CARO NÂU ĐEN-36 nữ</div>
<div class="t" style="left:411.5px;top:1089.41px;font-size:14.4px;color:#8f99a6;">size nhỏ</div>
<div class="t" style="left:627.5px;top:1012.98px;font-size:17.5px;color:#1f2329;">xingdaihong</div>
<div class="t" style="left:847.0px;top:1012.98px;font-size:17.5px;color:#1f2329;">2</div>
<div class="t" style="left:1066.5px;top:1012.98px;font-size:17.5px;color:#1f2329;">111</div>
<div class="t" style="left:1285.0px;top:1012.98px;font-size:17.5px;color:#1f2329;">0</div>
<div class="b" style="left:1514px;top:1018px;width:10px;height:10px;background:#13a87b;border-radius:50%;"></div>
<div class="t" style="left:1534.3px;top:1016.31px;font-size:16.4px;color:#1f2329;">Successfully</div>
<div class="t" style="left:1723.6px;top:1013.38px;font-size:17.5px;color:#1f2329;">Distribution Inventory</div>
<div class="t" style="left:1723.6px;top:1039.48px;font-size:17.5px;color:#1f2329;">Initialization</div>
<div class="t" style="left:1942.5px;top:1013.38px;font-size:17.5px;color:#1f2329;">Default Inventory Push</div>
<div class="t" style="left:1942.5px;top:1039.48px;font-size:17.5px;color:#1f2329;">Rule</div>
<div class="t" style="left:2161.7px;top:1013.18px;font-size:17.5px;color:#1f2329;">27 Mar 2026 13:15</div>
<svg class="s" style="left:2386px;top:1012px;" width="19" height="20" viewBox="0 0 19 20"><path d="M2.4,3 Q2.4,1.6 3.8,1.6 L11.8,1.6 L16.4,6.4 L16.4,17 Q16.4,18.4 15,18.4 L3.8,18.4 Q2.4,18.4 2.4,17 Z" fill="none" stroke="#4a5568" stroke-width="1.5" stroke-linejoin="round"/><path d="M11.6,1.8 L11.6,6.4 L16.2,6.4" fill="none" stroke="#4a5568" stroke-width="1.3"/><path d="M6,10.3 L13.2,10.3 M6,13.9 L10.8,13.9" stroke="#4a5568" stroke-width="1.5"/></svg>
<div class="b" style="left:321px;top:1134px;width:2207px;height:1px;background:#eef0f3;"></div>
<svg class="s" style="left:341px;top:1157px;" width="60" height="45" viewBox="0 0 60 45"><defs><filter id="nz" x="0" y="0" width="100%" height="100%"><feTurbulence type="fractalNoise" baseFrequency="0.9" numOctaves="2" seed="3"/><feColorMatrix values="0 0 0 0 0.5  0 0 0 0 0.5  0 0 0 0 0.5  0 0 0 0.35 0"/><feComposite in2="SourceGraphic" operator="in"/></filter></defs><rect width="60" height="45" fill="#7f8c9d"/><rect width="60" height="45" fill="#fff" filter="url(#nz)"/><g transform="rotate(-10 25 15)"><rect x="8" y="8" width="34" height="15" rx="7.5" fill="#101015"/><rect x="22" y="8" width="13" height="15" fill="#474d58"/><rect x="22" y="8" width="3.25" height="3.75" fill="#23262d"/><rect x="28.5" y="8" width="3.25" height="3.75" fill="#23262d"/><rect x="25.25" y="11.75" width="3.25" height="3.75" fill="#23262d"/><rect x="31.75" y="11.75" width="3.25" height="3.75" fill="#23262d"/><rect x="22" y="15.5" width="3.25" height="3.75" fill="#23262d"/><rect x="28.5" y="15.5" width="3.25" height="3.75" fill="#23262d"/><rect x="25.25" y="19.25" width="3.25" height="3.75" fill="#23262d"/><rect x="31.75" y="19.25" width="3.25" height="3.75" fill="#23262d"/></g><g transform="rotate(-8 34.5 29)"><rect x="16" y="21.5" width="37" height="15" rx="7.5" fill="#101015"/><rect x="33" y="21.5" width="13" height="15" fill="#474d58"/><rect x="33" y="21.5" width="3.25" height="3.75" fill="#23262d"/><rect x="39.5" y="21.5" width="3.25" height="3.75" fill="#23262d"/><rect x="36.25" y="25.25" width="3.25" height="3.75" fill="#23262d"/><rect x="42.75" y="25.25" width="3.25" height="3.75" fill="#23262d"/><rect x="33" y="29" width="3.25" height="3.75" fill="#23262d"/><rect x="39.5" y="29" width="3.25" height="3.75" fill="#23262d"/><rect x="36.25" y="32.75" width="3.25" height="3.75" fill="#23262d"/><rect x="42.75" y="32.75" width="3.25" height="3.75" fill="#23262d"/></g></svg>
<div class="t" style="left:411.5px;top:1155.11px;font-size:17px;color:#1f2329;">Dép Nam Nữ , trẻ em</div>
<div class="t" style="left:411.5px;top:1181.81px;font-size:17px;color:#1f2329;">điều mang được qua...</div>
<div class="t" style="left:627.5px;top:1154.98px;font-size:17.5px;color:#1f2329;">xingdaihong</div>
<div class="t" style="left:847.0px;top:1154.98px;font-size:17.5px;color:#1f2329;">2</div>
<div class="t" style="left:1066.5px;top:1154.98px;font-size:17.5px;color:#1f2329;">111</div>
<div class="t" style="left:1285.0px;top:1154.98px;font-size:17.5px;color:#1f2329;">0</div>
<div class="b" style="left:1514px;top:1160px;width:10px;height:10px;background:#13a87b;border-radius:50%;"></div>
<div class="t" style="left:1534.3px;top:1158.31px;font-size:16.4px;color:#1f2329;">Successfully</div>
<div class="t" style="left:1723.6px;top:1155.38px;font-size:17.5px;color:#1f2329;">Distribution Inventory</div>
<div class="t" style="left:1723.6px;top:1181.48px;font-size:17.5px;color:#1f2329;">Initialization</div>
<div class="t" style="left:1942.5px;top:1155.38px;font-size:17.5px;color:#1f2329;">Default Inventory Push</div>
<div class="t" style="left:1942.5px;top:1181.48px;font-size:17.5px;color:#1f2329;">Rule</div>
<div class="t" style="left:2161.7px;top:1155.18px;font-size:17.5px;color:#1f2329;">27 Mar 2026 13:15</div>
<svg class="s" style="left:2386px;top:1154px;" width="19" height="20" viewBox="0 0 19 20"><path d="M2.4,3 Q2.4,1.6 3.8,1.6 L11.8,1.6 L16.4,6.4 L16.4,17 Q16.4,18.4 15,18.4 L3.8,18.4 Q2.4,18.4 2.4,17 Z" fill="none" stroke="#4a5568" stroke-width="1.5" stroke-linejoin="round"/><path d="M11.6,1.8 L11.6,6.4 L16.2,6.4" fill="none" stroke="#4a5568" stroke-width="1.3"/><path d="M6,10.3 L13.2,10.3 M6,13.9 L10.8,13.9" stroke="#4a5568" stroke-width="1.5"/></svg>
<div class="b" style="left:1476px;top:145px;width:140px;height:178px;background:#fff;border-radius:8px;box-shadow:0 3px 14px rgba(0,0,0,0.13);z-index:40;"></div>
<div class="b" style="left:1486px;top:153px;width:120px;height:40px;background:#f3f3f5;border-radius:6px;z-index:41;"></div>
<div class="t" style="left:1502.0px;top:164.55px;font-size:17.3px;color:#1f2329;z-index:42;">Rule Name</div>
<div class="t" style="left:1502.0px;top:204.55px;font-size:17.3px;color:#1f2329;z-index:42;">SKU Name</div>
<div class="t" style="left:1502.0px;top:244.55px;font-size:17.3px;color:#1f2329;z-index:42;">SKU Title</div>
<div class="t" style="left:1502.0px;top:284.55px;font-size:17.3px;color:#1f2329;z-index:42;">GTIN</div>
<div class="b" style="left:2305px;top:261px;width:115px;height:40px;background:#262626;border-radius:5px;box-shadow:0 2px 8px rgba(0,0,0,0.15);z-index:20;"></div>
<svg class="s" style="left:2396px;top:300px;z-index:20;" width="14" height="11" viewBox="0 0 14 11"><path d="M0,0 L14,0 L7,10 Z" fill="#262626"/></svg>
<div class="t" style="left:2316.0px;top:271.81px;font-size:17px;color:#fff;z-index:21;-webkit-text-stroke:0.25px #fff;">Push Details</div>
<div class="b" style="left:2301px;top:256px;width:123px;height:49px;border:4px solid #ea1a22;border-radius:3px;z-index:35;"></div>
<svg class="s" style="left:0;top:0;z-index:50;" width="2549" height="1202"><polygon points="1456.7,152.8 1449.6,183.3 1446.8,171.9 1252.6,400.2 1251.6,399.4 1439.8,166.0 1428.1,165.4" fill="#ea1c24" stroke="#ea1c24" stroke-width="0.6" stroke-linejoin="round"/></svg>
<svg class="s" style="left:0;top:0;z-index:50;" width="2549" height="1202"><polygon points="2330.8,307.0 2332.7,338.2 2326.8,328.1 2243.0,515.6 2241.8,515.0 2318.4,324.5 2307.0,327.3" fill="#ea1c24" stroke="#ea1c24" stroke-width="0.6" stroke-linejoin="round"/></svg>
<div class="t" style="left:1135.5px;top:407.81px;font-size:19px;color:#ea1c24;font-weight:700;letter-spacing:-0.05px;z-index:50;">Searching conditions</div>
<div class="t" style="left:2146.2px;top:522.81px;font-size:19px;color:#ea1c24;font-weight:700;letter-spacing:-0.05px;z-index:50;">click to see the details</div>
<svg class="s" style="left:2521px;top:644px;z-index:50;" width="28" height="28" viewBox="0 0 28 28"><circle cx="12" cy="11.2" r="9.2" fill="none" stroke="#3d1fb0" stroke-width="2"/><path d="M18.6,17.8 L26.4,25.6" stroke="#3d1fb0" stroke-width="2.2"/></svg>
<div class="b" style="left:2499px;top:943px;width:45px;height:45px;background:#a9adb8;border-radius:22.5px 0 0 22.5px;z-index:50;"></div>
<svg class="s" style="left:2514px;top:957px;z-index:51;" width="13" height="18" viewBox="0 0 13 18"><path d="M11,1.4 L3,8.9 L11,16.4" fill="none" stroke="#fff" stroke-width="1.6"/></svg>
</body></html>
